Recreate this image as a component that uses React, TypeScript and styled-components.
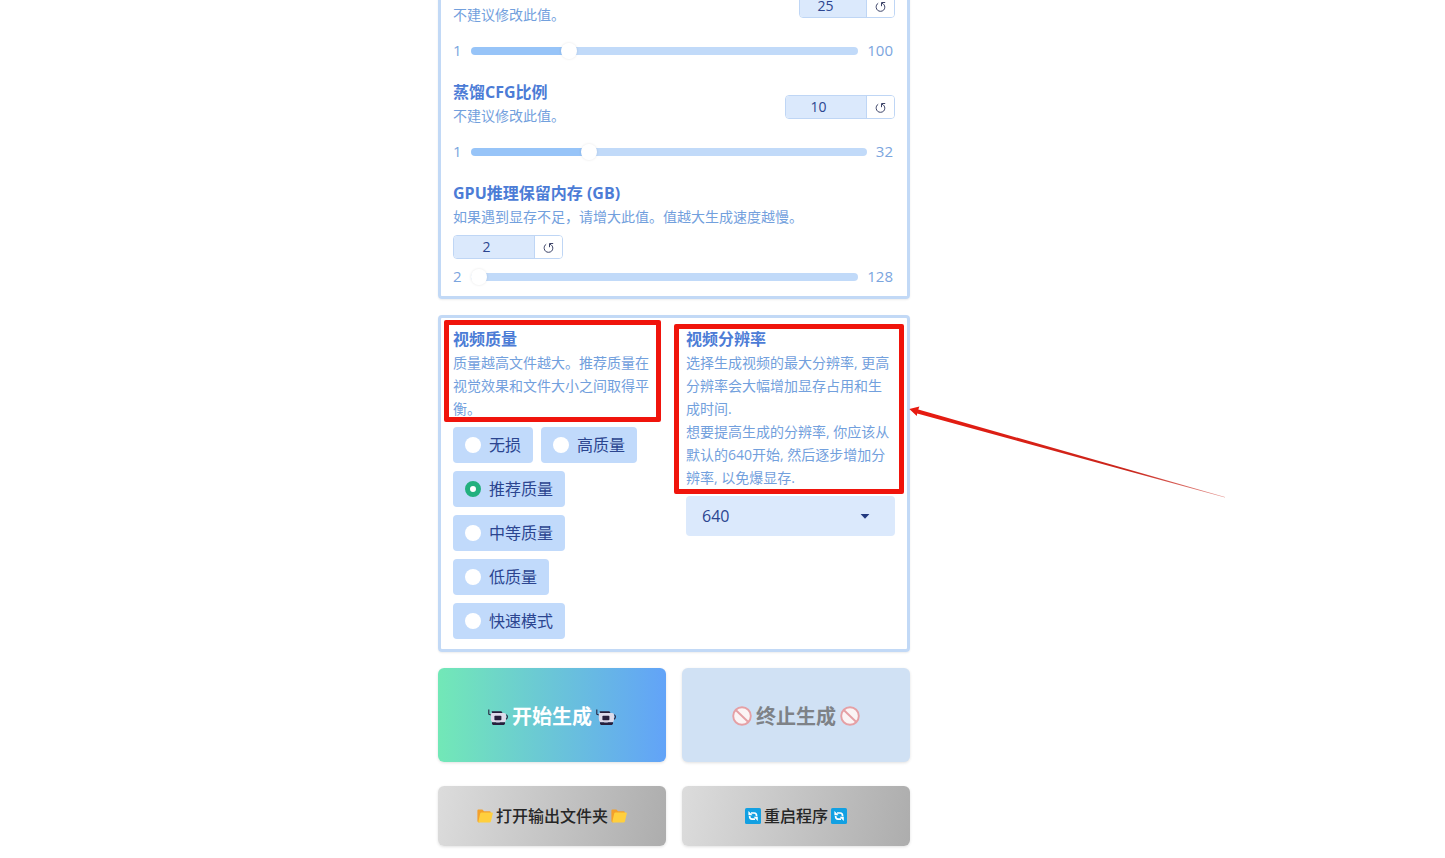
import React, { useState } from "react";
import styled, { createGlobalStyle } from "styled-components";

const GlobalStyle = createGlobalStyle`
  *, *::before, *::after { box-sizing: border-box; }
  body {
    margin: 0;
    background: #fff;
    overflow-x: hidden;
    font-family: "Open Sans", "Noto Sans CJK SC", sans-serif;
    font-size: 16px;
    color: #2b4590;
  }
  button, input, select { font-family: inherit; }
`;

const Page = styled.main`
  display: grid;
  grid-template-columns: 438fr 472fr 535fr;
  margin-top: -6px;
  padding-bottom: 12px;
`;

const Column = styled.div`
  grid-column: 2;
  display: flex;
  flex-direction: column;
  gap: 16px;
  min-width: 0;
`;

const Panel = styled.section<{ $open?: boolean }>`
  border: 3px solid #c2d9f6;
  border-top-width: ${(p) => (p.$open ? "0" : "3px")};
  border-radius: ${(p) => (p.$open ? "0 0 4px 4px" : "4px")};
  padding: ${(p) => (p.$open ? "0 12px 7px" : "9px 12px 10px")};
  box-shadow: 0 1px 2px rgba(0, 0, 0, 0.08);
`;

const SliderList = styled(Panel)`
  display: flex;
  flex-direction: column;
  gap: 17px;
`;

const Field = styled.div<{ $gap: number }>`
  display: flex;
  flex-direction: column;
  gap: ${(p) => p.$gap}px;
`;

const Head = styled.div<{ $stacked?: boolean }>`
  display: flex;
  flex-direction: ${(p) => (p.$stacked ? "column" : "row")};
  justify-content: space-between;
  align-items: ${(p) => (p.$stacked ? "flex-start" : "flex-end")};
  gap: 6px;
`;

const Texts = styled.div`
  display: flex;
  flex-direction: column;
  padding-bottom: 1px;
  position: relative;
`;

const Title = styled.span`
  font-size: 16px;
  line-height: 24px;
  font-weight: 700;
  color: #4c7cd6;
`;

const Description = styled.span`
  font-size: 14px;
  line-height: 23px;
  color: #72a0dd;
`;

const NumberBox = styled.div<{ $width: number; $raised?: boolean }>`
  display: flex;
  flex: none;
  width: ${(p) => p.$width}px;
  height: 24px;
  margin-bottom: ${(p) => (p.$raised ? "9px" : "0")};
  border: 1px solid #bfd6f5;
  border-radius: 4px;
  overflow: hidden;
`;

const NumberInput = styled.input`
  flex: 1;
  min-width: 0;
  border: 0;
  border-right: 1px solid #bfd6f5;
  padding: 0 15px 1px 0;
  background: #dbe9fc;
  color: #2b4590;
  font-size: 14px;
  text-align: center;
  outline: none;
  appearance: textfield;
  &::-webkit-inner-spin-button { appearance: none; margin: 0; }
`;

const ResetButton = styled.button`
  display: grid;
  place-items: center;
  width: 27px;
  border: 0;
  padding: 2px 0 0;
  background: #fff;
  color: #3d4468;
  cursor: pointer;
`;

const SliderRow = styled.div`
  display: flex;
  align-items: center;
  gap: 9px;
  height: 24px;
  padding-right: 2px;
`;

const Bound = styled.span`
  padding-bottom: 2px;
  font-size: 15px;
  line-height: 22px;
  color: #7ba5de;
`;

const Range = styled.input<{ $fill: number }>`
  flex: 1;
  min-width: 0;
  height: 8px;
  margin: 0;
  appearance: none;
  border-radius: 4px;
  background: linear-gradient(to right, #97c4f8 ${(p) => p.$fill}%, #c1daf9 ${(p) => p.$fill}%);
  &::-webkit-slider-thumb {
    appearance: none;
    width: 16px;
    height: 16px;
    border-radius: 50%;
    background: #fff;
    box-shadow: 0 0 2px 1px rgba(0, 0, 0, 0.05);
  }
`;

const OptionsPanel = styled(Panel)`
  display: grid;
  grid-template-columns: 1fr 1fr;
  gap: 24px;
  align-items: start;
`;

const RadioGroup = styled.div`
  display: flex;
  flex-wrap: wrap;
  gap: 8px;
`;

const RadioLabel = styled.label`
  display: flex;
  align-items: center;
  gap: 8px;
  height: 36px;
  padding: 0 12px;
  border-radius: 4px;
  background: #c1dafb;
  font-size: 16px;
  line-height: 24px;
  cursor: pointer;
`;

const Radio = styled.input`
  appearance: none;
  width: 16px;
  height: 16px;
  margin: 0;
  border-radius: 50%;
  background: #fff;
  &:checked { border: 5px solid #22b07e; }
`;

const SelectWrap = styled.div`
  display: grid;
  align-items: center;
`;

const Select = styled.select`
  grid-area: 1 / 1;
  height: 40px;
  padding: 0 16px;
  border: 0;
  border-radius: 4px;
  appearance: none;
  background: #dbe9fc;
  color: #2b4590;
  font-size: 16px;
`;

const Caret = styled.svg`
  grid-area: 1 / 1;
  justify-self: end;
  margin-right: 25px;
  pointer-events: none;
`;

const Highlight = styled.div<{ $inset: string }>`
  position: absolute;
  inset: ${(p) => p.$inset};
  border: 5px solid #f0140c;
  border-radius: 2px;
  pointer-events: none;
  z-index: 1;
`;

const Arrow = styled.svg`
  position: absolute;
  left: calc(100% + 14px);
  top: 77px;
  pointer-events: none;
`;

const Actions = styled.div`
  display: grid;
  grid-template-columns: 1fr 1fr;
  gap: 24px 16px;
`;

const ActionButton = styled.button<{ $kind: "start" | "stop" | "plain" }>`
  display: flex;
  align-items: center;
  justify-content: center;
  gap: ${(p) => (p.$kind === "plain" ? "3px" : "4px")};
  height: ${(p) => (p.$kind === "plain" ? "60px" : "94px")};
  border: 0;
  border-radius: 6px;
  padding: ${(p) => (p.$kind === "plain" ? "0 8px 2px" : "0 8px")};
  font-size: ${(p) => (p.$kind === "plain" ? "16px" : "20px")};
  font-weight: ${(p) => (p.$kind === "plain" ? 500 : 700)};
  color: ${(p) => ({ start: "#fff", stop: "#7e8287", plain: "#262626" })[p.$kind]};
  background: ${(p) =>
    ({
      start: "linear-gradient(to right, #72e8b7, #62a3f8)",
      stop: "#d0e1f4",
      plain: "linear-gradient(100deg, #dcdcdc, #adadad)",
    })[p.$kind]};
  box-shadow: 0 1px 3px rgba(0, 0, 0, 0.12);
  svg { margin-top: 2px; }
`;

const ResetIcon = () => (
  <svg width="12" height="12" viewBox="0 0 12 12" fill="none" stroke="currentColor" aria-hidden="true">
    <path d="M3.2 2.2C1.6 3.3 1 4.8 1.2 6.5C1.5 8.9 3.3 10.3 5.5 10.3C8 10.3 9.8 8.6 9.8 6.2C9.8 4.4 8.8 2.9 7 2.3" />
    <path d="M10.2 1.5H6.5V5.2" />
  </svg>
);

const RobotIcon = () => (
  <svg width="20" height="20" viewBox="0 0 20 20" aria-hidden="true">
    <path d="M.8 3.4V8.2L3 9" stroke="#24203c" strokeWidth="1.1" fill="none" />
    <path d="M3.6 5.2H13.4L14.8 7.4H4.4Z" fill="#28203c" />
    <path d="M2.8 8Q2.8 7 4 7H16.2Q18 7 18 9V13.4Q18 16 15.6 16.6H4.6Q2.8 15.4 2.8 13Z" fill="#dddbea" />
    <path d="M18.3 8.6Q20.6 10.4 18.2 13.4" stroke="#28203c" strokeWidth="1.1" fill="none" />
    <rect x="6.4" y="9.8" width="7" height="4.4" rx=".8" fill="#28203c" />
    <path d="M4 16.2H17V18L15.8 18.9H5L4 18Z" fill="#28203c" />
    <path d="M8.2 16.2H11.8" stroke="#b8b5cb" strokeWidth=".8" />
  </svg>
);

const BanIcon = () => (
  <svg width="20" height="20" viewBox="0 0 20 20" aria-hidden="true">
    <circle cx="10" cy="10" r="8.8" fill="#fbf4f5" stroke="#e5a0a5" strokeWidth="1.9" />
    <path d="M4 4.2L16 15.8" stroke="#e5a0a5" strokeWidth="1.9" />
  </svg>
);

const FolderIcon = () => (
  <svg width="16" height="16" viewBox="0 0 16 16" aria-hidden="true">
    <path d="M.4 2.6Q.4 1.6 1.4 1.6H5.4L7 3.2H12.6Q13.8 3.2 13.8 4.4V8L2 14.4Q.4 14.4 .4 13Z" fill="#f3a02b" />
    <path d="M4.4 4.6H15Q16 4.6 15.8 5.6L13.9 13.4Q13.6 14.4 12.6 14.4H1.8Q1.1 14.4 1.4 13.4L3.2 5.6Q3.5 4.6 4.4 4.6Z" fill="#ffcf3d" />
  </svg>
);

const RefreshIcon = () => (
  <svg width="16" height="16" viewBox="0 0 16 16" aria-hidden="true">
    <rect width="16" height="16" rx="1.6" fill="#12a0e2" />
    <path d="M6 5H9.2Q11.6 5 11.6 8.2M4.6 8Q4.6 11.2 7 11.2H10" fill="none" stroke="#fff" strokeWidth="1.7" />
    <path d="M3.4 3V7.2H7.6ZM12.8 13V8.8H8.6Z" fill="#fff" />
  </svg>
);

interface SliderProps {
  id: string;
  title?: string;
  info: string;
  min: number;
  max: number;
  initial: number;
  boxWidth: number;
  stacked?: boolean;
}

function SliderField({ id, title, info, min, max, initial, boxWidth, stacked }: SliderProps) {
  const [value, setValue] = useState(initial);
  const change = (e: React.ChangeEvent<HTMLInputElement>) => setValue(Number(e.target.value));
  return (
    <Field $gap={stacked ? 6 : 12}>
      <Head $stacked={stacked}>
        <Texts as="label" htmlFor={id}>
          {title && <Title>{title}</Title>}
          <Description>{info}</Description>
        </Texts>
        <NumberBox $width={boxWidth} $raised={!stacked}>
          <NumberInput id={id} type="number" min={min} max={max} value={value} onChange={change} />
          <ResetButton type="button" aria-label="↺" onClick={() => setValue(initial)}>
            <ResetIcon />
          </ResetButton>
        </NumberBox>
      </Head>
      <SliderRow>
        <Bound>{min}</Bound>
        <Range
          type="range"
          aria-label={title ?? info}
          min={min}
          max={max}
          value={value}
          onChange={change}
          $fill={((value - min) / (max - min)) * 100}
        />
        <Bound>{max}</Bound>
      </SliderRow>
    </Field>
  );
}

const qualities = ["无损", "高质量", "推荐质量", "中等质量", "低质量", "快速模式"];

export default function App() {
  const [quality, setQuality] = useState("推荐质量");
  return (
    <>
      <GlobalStyle />
      <Page>
        <Column>
          <SliderList $open>
            <SliderField id="steps" info="不建议修改此值。" min={1} max={100} initial={25} boxWidth={96} />
            <SliderField id="cfg" title="蒸馏CFG比例" info="不建议修改此值。" min={1} max={32} initial={10} boxWidth={110} />
            <SliderField
              id="memory"
              title="GPU推理保留内存 (GB)"
              info="如果遇到显存不足，请增大此值。值越大生成速度越慢。"
              min={2}
              max={128}
              initial={2}
              boxWidth={110}
              stacked
            />
          </SliderList>

          <OptionsPanel>
            <Field $gap={6}>
              <Texts id="quality-label">
                <Title>视频质量</Title>
                <Description>质量越高文件越大。推荐质量在视觉效果和文件大小之间取得平衡。</Description>
                <Highlight $inset="-7px 1px -1px -9px" />
              </Texts>
              <RadioGroup role="radiogroup" aria-labelledby="quality-label">
                {qualities.map((name) => (
                  <RadioLabel key={name}>
                    <Radio type="radio" name="quality" checked={quality === name} onChange={() => setQuality(name)} />
                    {name}
                  </RadioLabel>
                ))}
              </RadioGroup>
            </Field>

            <Field $gap={6}>
              <Texts as="label" htmlFor="resolution">
                <Title>视频分辨率</Title>
                <Description>
                  选择生成视频的最大分辨率, 更高分辨率会大幅增加显存占用和生成时间.
                  <br />
                  想要提高生成的分辨率, 你应该从默认的640开始, 然后逐步增加分辨率, 以免爆显存.
                </Description>
                <Highlight $inset="-3px -9px -4px -12px" />
                <Arrow width="320" height="96" viewBox="0 0 320 96" aria-hidden="true">
                  <defs>
                    <linearGradient id="fade" x1="0" x2="1" y1="0" y2="0">
                      <stop offset="0" stopColor="#e81a10" />
                      <stop offset="0.7" stopColor="#c9261c" />
                      <stop offset="1" stopColor="#c9261c" stopOpacity="0.5" />
                    </linearGradient>
                  </defs>
                  <path d="M0.3 5L10.4 2.6L9.3 5.4L316 93L316 93.6L8.2 9.6L7.8 12Z" fill="url(#fade)" />
                </Arrow>
              </Texts>
              <SelectWrap>
                <Select id="resolution" defaultValue="640">
                  <option value="640">640</option>
                </Select>
                <Caret width="10" height="5" viewBox="0 0 10 5" aria-hidden="true">
                  <path d="M0.6 0H9.4L5 4.8Z" fill="#22397f" />
                </Caret>
              </SelectWrap>
            </Field>
          </OptionsPanel>

          <Actions>
            <ActionButton type="button" $kind="start">
              <RobotIcon />
              开始生成
              <RobotIcon />
            </ActionButton>
            <ActionButton type="button" $kind="stop" disabled>
              <BanIcon />
              终止生成
              <BanIcon />
            </ActionButton>
            <ActionButton type="button" $kind="plain">
              <FolderIcon />
              打开输出文件夹
              <FolderIcon />
            </ActionButton>
            <ActionButton type="button" $kind="plain">
              <RefreshIcon />
              重启程序
              <RefreshIcon />
            </ActionButton>
          </Actions>
        </Column>
      </Page>
    </>
  );
}
